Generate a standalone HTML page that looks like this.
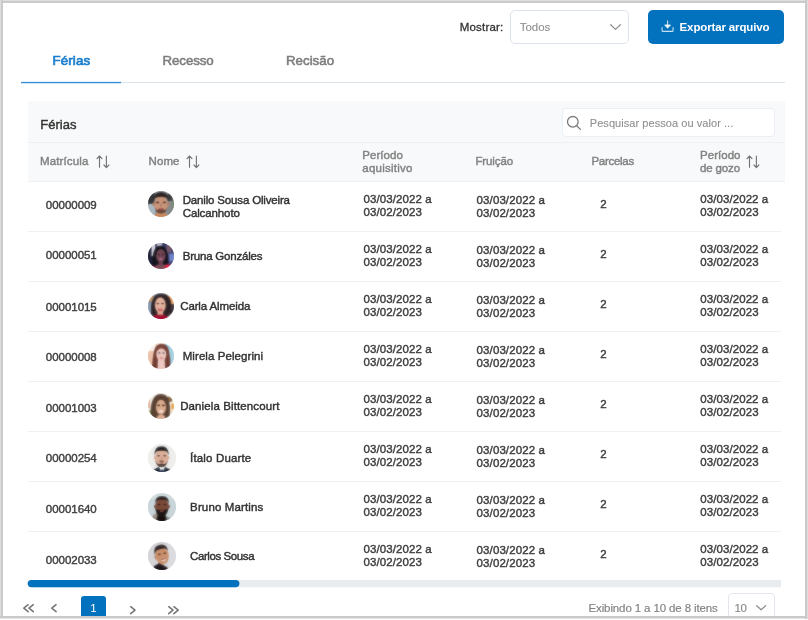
<!DOCTYPE html><html lang="pt-BR"><head><meta charset="utf-8"><title>Férias</title><style>
html,body{margin:0;padding:0}body{width:808px;height:620px;overflow:hidden;background:#fff;position:relative;font-family:"Liberation Sans",sans-serif;-webkit-font-smoothing:antialiased}.t{position:absolute;white-space:pre}.tx{position:absolute;left:0;top:0;width:808px;height:620px}.pg{position:absolute;inset:0;overflow:hidden;will-change:transform}
</style></head><body><div class="pg">
<div style="position:absolute;left:21px;top:82px;width:764px;height:1px;background:#dde3ea"></div>
<div style="position:absolute;left:21px;top:82px;width:100px;height:1px;background:#2f8ad8"></div>
<div style="position:absolute;left:21px;top:83px;width:100px;height:1px;background:rgba(47,138,216,0.22)"></div>
<div style="position:absolute;left:21px;top:81px;width:100px;height:1px;background:rgba(47,138,216,0.10)"></div>
<div style="position:absolute;left:510px;top:10px;width:117px;height:32px;border:1px solid #dde3ec;border-radius:5px;background:#fff"></div>
<svg style="overflow:visible;position:absolute;left:609.7px;top:23.9px" width="11" height="6.2" viewBox="0 0 11 6.2" fill="none" stroke="#8c8c8c" stroke-width="1.2" stroke-linecap="round" stroke-linejoin="round"><path d="M0.7 0.7L5.5 5.4L10.3 0.7"/></svg>
<div style="position:absolute;left:648px;top:9.5px;width:136px;height:34px;background:#0271be;border-radius:5px"></div>
<svg style="overflow:visible;position:absolute;left:661.3px;top:19.8px" width="13" height="12.5" viewBox="0 0 13 12.5" fill="none" stroke="#fff" stroke-opacity="0.78" stroke-width="1.1" stroke-linecap="round" stroke-linejoin="round"><path d="M6.6 0.9V7"/><path d="M3.9 5.1L6.6 8L9.3 5.1Z" fill="#fff" fill-opacity="0.78"/><path d="M1.05 7.5V10.4Q1.05 11.4 2.05 11.4H11.05Q12.05 11.4 12.05 10.4V7.5"/></svg>
<div style="position:absolute;left:27.5px;top:101px;width:757.5px;height:81px;background:#f8f9fa"></div>
<div style="position:absolute;left:27.5px;top:141.5px;width:757.5px;height:1px;background:#eef0f2"></div>
<div style="position:absolute;left:562px;top:108px;width:211px;height:27px;border:1px solid #eceff3;border-radius:4px;background:#fff;box-sizing:content-box"></div>
<svg style="overflow:visible;position:absolute;left:566.5px;top:116px" width="14" height="14" viewBox="0 0 14 14" fill="none" stroke="#7c7c7c" stroke-width="1.3" stroke-linecap="round"><circle cx="5.8" cy="5.8" r="5.3"/><path d="M9.7 9.7L13.4 13.4"/></svg>
<svg style="overflow:visible;position:absolute;left:95.70px;top:154.70px" width="14.2" height="13.4" viewBox="-0.3 -0.3 14.2 13.4" fill="none" stroke="#757575" stroke-width="1.15" stroke-linecap="round" stroke-linejoin="round"><path d="M3.2 12V0.8M0.7 3.3L3.2 0.7L5.7 3.3"/><path d="M10.1 0.8V12.2M7.6 9.7L10.1 12.3L12.6 9.7"/></svg>
<svg style="overflow:visible;position:absolute;left:185.50px;top:154.70px" width="14.2" height="13.4" viewBox="-0.3 -0.3 14.2 13.4" fill="none" stroke="#757575" stroke-width="1.15" stroke-linecap="round" stroke-linejoin="round"><path d="M3.2 12V0.8M0.7 3.3L3.2 0.7L5.7 3.3"/><path d="M10.1 0.8V12.2M7.6 9.7L10.1 12.3L12.6 9.7"/></svg>
<svg style="overflow:visible;position:absolute;left:746.40px;top:154.70px" width="14.2" height="13.4" viewBox="-0.3 -0.3 14.2 13.4" fill="none" stroke="#757575" stroke-width="1.15" stroke-linecap="round" stroke-linejoin="round"><path d="M3.2 12V0.8M0.7 3.3L3.2 0.7L5.7 3.3"/><path d="M10.1 0.8V12.2M7.6 9.7L10.1 12.3L12.6 9.7"/></svg>
<div style="position:absolute;left:27.5px;top:181px;width:757.5px;height:1px;background:#eef0f3"></div>
<div style="position:absolute;left:27.5px;top:231px;width:753px;height:1px;background:#eef0f3"></div>
<div style="position:absolute;left:27.5px;top:281px;width:753px;height:1px;background:#eef0f3"></div>
<div style="position:absolute;left:27.5px;top:331px;width:753px;height:1px;background:#eef0f3"></div>
<div style="position:absolute;left:27.5px;top:381px;width:753px;height:1px;background:#eef0f3"></div>
<div style="position:absolute;left:27.5px;top:431px;width:753px;height:1px;background:#eef0f3"></div>
<div style="position:absolute;left:27.5px;top:481px;width:753px;height:1px;background:#eef0f3"></div>
<div style="position:absolute;left:27.5px;top:531px;width:753px;height:1px;background:#eef0f3"></div>
<svg style="overflow:visible;position:absolute;left:146.70px;top:190.40px" width="28" height="28" viewBox="-1 -1 28 28"><defs><clipPath id="ca160_204"><circle cx="13.0" cy="13.0" r="13.0"/></clipPath><filter id="fa160_204" x="-20%" y="-20%" width="140%" height="140%"><feGaussianBlur stdDeviation="0.85"/></filter></defs><g clip-path="url(#ca160_204)"><g filter="url(#fa160_204)"><rect x="-2" y="-2" width="30" height="30" fill="#8d9499"/>
<rect x="-2" y="-2" width="8.5" height="15" fill="#35383c"/>
<rect x="-2" y="13" width="9" height="15" fill="#aab9c1"/>
<rect x="19.5" y="-2" width="9" height="30" fill="#858a8b"/>
<rect x="19.5" y="3" width="5" height="7" fill="#3f3f40"/>
<rect x="24.800" y="6" width="2.500" height="12" fill="#6f8a62"/>
<ellipse cx="13" cy="25.5" rx="7.2" ry="4" fill="#c98a5e"/>
<ellipse cx="13" cy="13.6" rx="6.800" ry="8.6" fill="#c9967b"/>
<ellipse cx="5.6" cy="13.4" rx="1.2" ry="1.8" fill="#b98263"/>
<ellipse cx="20.4" cy="13.4" rx="1.2" ry="1.8" fill="#b98263"/>
<path d="M6.600 15.5Q7 22.3 13 22.600Q19 22.3 19.400 15.5Q18.600 19 16.200 19.300Q13 16.400 9.800 19.300Q7.400 19 6.600 15.500Z" fill="#5f3f34"/><ellipse cx="13" cy="19.800" rx="3.600" ry="2.400" fill="#6a463a"/>
<ellipse cx="13" cy="18" rx="2.3" ry="1" fill="#a8564f"/>
<path d="M5.4 11Q4.6 1 13 1Q21.4 1 20.6 11Q19.8 7.2 17.5 6.6Q13 5.600 8.500 6.6Q6.2 7.2 5.4 11Z" fill="#2a211f"/>
<ellipse cx="9.6" cy="11.400" rx="1.7" ry="0.9" fill="#4a332b"/>
<ellipse cx="16.4" cy="11.4" rx="1.7" ry="0.9" fill="#4a332b"/>
<ellipse cx="13" cy="14.2" rx="1" ry="1.6" fill="#b07d62"/></g><g opacity="0.45"><rect x="-2" y="-2" width="30" height="30" fill="#8d9499"/>
<rect x="-2" y="-2" width="8.5" height="15" fill="#35383c"/>
<rect x="-2" y="13" width="9" height="15" fill="#aab9c1"/>
<rect x="19.5" y="-2" width="9" height="30" fill="#858a8b"/>
<rect x="19.5" y="3" width="5" height="7" fill="#3f3f40"/>
<rect x="24.800" y="6" width="2.500" height="12" fill="#6f8a62"/>
<ellipse cx="13" cy="25.5" rx="7.2" ry="4" fill="#c98a5e"/>
<ellipse cx="13" cy="13.6" rx="6.800" ry="8.6" fill="#c9967b"/>
<ellipse cx="5.6" cy="13.4" rx="1.2" ry="1.8" fill="#b98263"/>
<ellipse cx="20.4" cy="13.4" rx="1.2" ry="1.8" fill="#b98263"/>
<path d="M6.600 15.5Q7 22.3 13 22.600Q19 22.3 19.400 15.5Q18.600 19 16.200 19.300Q13 16.400 9.800 19.300Q7.400 19 6.600 15.500Z" fill="#5f3f34"/><ellipse cx="13" cy="19.800" rx="3.600" ry="2.400" fill="#6a463a"/>
<ellipse cx="13" cy="18" rx="2.3" ry="1" fill="#a8564f"/>
<path d="M5.4 11Q4.6 1 13 1Q21.4 1 20.6 11Q19.8 7.2 17.5 6.6Q13 5.600 8.500 6.6Q6.2 7.2 5.4 11Z" fill="#2a211f"/>
<ellipse cx="9.6" cy="11.400" rx="1.7" ry="0.9" fill="#4a332b"/>
<ellipse cx="16.4" cy="11.4" rx="1.7" ry="0.9" fill="#4a332b"/>
<ellipse cx="13" cy="14.2" rx="1" ry="1.6" fill="#b07d62"/></g></g></svg>
<svg style="overflow:visible;position:absolute;left:146.70px;top:242.10px" width="28" height="28" viewBox="-1 -1 28 28"><defs><clipPath id="ca160_256"><circle cx="13.0" cy="13.0" r="13.0"/></clipPath><filter id="fa160_256" x="-20%" y="-20%" width="140%" height="140%"><feGaussianBlur stdDeviation="0.85"/></filter></defs><g clip-path="url(#ca160_256)"><g filter="url(#fa160_256)"><rect x="-2" y="-2" width="30" height="30" fill="#3d3c62"/>
<rect x="-2" y="-2" width="7" height="30" fill="#20213a"/>
<rect x="3.6" y="-2" width="3.4" height="15" fill="#d9d9e6"/>
<rect x="9" y="-2" width="5" height="5" fill="#b9b9cf"/>
<rect x="18" y="-2" width="10" height="30" fill="#4e4c7c"/>
<rect x="21.500" y="11" width="6" height="7" fill="#6f88cb"/>
<rect x="19" y="1" width="4" height="8" fill="#7a5a6a"/>
<path d="M4.5 23Q3 3 12.6 2.6Q21.5 3 20.5 23Z" fill="#15121d"/>
<ellipse cx="12.8" cy="25" rx="5.600" ry="4" fill="#7d4c5a"/>
<ellipse cx="12.8" cy="12.8" rx="4.7" ry="6.500" fill="#714654"/>
<ellipse cx="12.8" cy="20.5" rx="2.2" ry="2.5" fill="#6a4050"/>
<ellipse cx="10.8" cy="11.6" rx="1.3" ry="0.8" fill="#3a2430"/>
<ellipse cx="14.9" cy="11.6" rx="1.3" ry="0.8" fill="#3a2430"/>
<ellipse cx="12.8" cy="16" rx="1.7" ry="0.9" fill="#b0708a"/>
<path d="M16.8 28L17.5 21.5L26 22.500L26 28Z" fill="#e32e4b"/>
<path d="M1 28L3 22.5L8 24.500L8 28Z" fill="#d84478"/></g><g opacity="0.45"><rect x="-2" y="-2" width="30" height="30" fill="#3d3c62"/>
<rect x="-2" y="-2" width="7" height="30" fill="#20213a"/>
<rect x="3.6" y="-2" width="3.4" height="15" fill="#d9d9e6"/>
<rect x="9" y="-2" width="5" height="5" fill="#b9b9cf"/>
<rect x="18" y="-2" width="10" height="30" fill="#4e4c7c"/>
<rect x="21.500" y="11" width="6" height="7" fill="#6f88cb"/>
<rect x="19" y="1" width="4" height="8" fill="#7a5a6a"/>
<path d="M4.5 23Q3 3 12.6 2.6Q21.5 3 20.5 23Z" fill="#15121d"/>
<ellipse cx="12.8" cy="25" rx="5.600" ry="4" fill="#7d4c5a"/>
<ellipse cx="12.8" cy="12.8" rx="4.7" ry="6.500" fill="#714654"/>
<ellipse cx="12.8" cy="20.5" rx="2.2" ry="2.5" fill="#6a4050"/>
<ellipse cx="10.8" cy="11.6" rx="1.3" ry="0.8" fill="#3a2430"/>
<ellipse cx="14.9" cy="11.6" rx="1.3" ry="0.8" fill="#3a2430"/>
<ellipse cx="12.8" cy="16" rx="1.7" ry="0.9" fill="#b0708a"/>
<path d="M16.8 28L17.5 21.5L26 22.500L26 28Z" fill="#e32e4b"/>
<path d="M1 28L3 22.5L8 24.500L8 28Z" fill="#d84478"/></g></g></svg>
<svg style="overflow:visible;position:absolute;left:146.70px;top:292.00px" width="28" height="28" viewBox="-1 -1 28 28"><defs><clipPath id="ca160_306"><circle cx="13.0" cy="13.0" r="13.0"/></clipPath><filter id="fa160_306" x="-20%" y="-20%" width="140%" height="140%"><feGaussianBlur stdDeviation="0.85"/></filter></defs><g clip-path="url(#ca160_306)"><g filter="url(#fa160_306)"><rect x="-2" y="-2" width="30" height="30" fill="#8c9099"/>
<rect x="-2" y="10" width="8" height="14" fill="#8fa2b5"/>
<rect x="19" y="2" width="9" height="9" fill="#e8a877"/>
<rect x="21" y="11" width="7" height="10" fill="#4a4448"/>
<rect x="-1" y="3" width="6" height="5" fill="#c89a70"/>
<path d="M3 21Q1.500 1 13 1Q24 1 23.500 14Q24 22 19 23.500L5 23Z" fill="#2e2326"/>
<ellipse cx="12.300" cy="12.200" rx="5.300" ry="7.600" fill="#e3b39d"/>
<rect x="9.500" y="18" width="5.500" height="6" fill="#dca78f"/>
<ellipse cx="12.3" cy="16.4" rx="2.4" ry="1.5" fill="#c12f3e"/>
<ellipse cx="12.3" cy="16" rx="1.7" ry="0.6" fill="#f6ecea"/>
<ellipse cx="9.900" cy="10.6" rx="1.4" ry="0.8" fill="#5a3c38"/>
<ellipse cx="14.6" cy="10.6" rx="1.4" ry="0.8" fill="#5a3c38"/>
<ellipse cx="12" cy="26.200" rx="9.200" ry="4.600" fill="#a40f31"/></g><g opacity="0.45"><rect x="-2" y="-2" width="30" height="30" fill="#8c9099"/>
<rect x="-2" y="10" width="8" height="14" fill="#8fa2b5"/>
<rect x="19" y="2" width="9" height="9" fill="#e8a877"/>
<rect x="21" y="11" width="7" height="10" fill="#4a4448"/>
<rect x="-1" y="3" width="6" height="5" fill="#c89a70"/>
<path d="M3 21Q1.500 1 13 1Q24 1 23.500 14Q24 22 19 23.500L5 23Z" fill="#2e2326"/>
<ellipse cx="12.300" cy="12.200" rx="5.300" ry="7.600" fill="#e3b39d"/>
<rect x="9.500" y="18" width="5.500" height="6" fill="#dca78f"/>
<ellipse cx="12.3" cy="16.4" rx="2.4" ry="1.5" fill="#c12f3e"/>
<ellipse cx="12.3" cy="16" rx="1.7" ry="0.6" fill="#f6ecea"/>
<ellipse cx="9.900" cy="10.6" rx="1.4" ry="0.8" fill="#5a3c38"/>
<ellipse cx="14.6" cy="10.6" rx="1.4" ry="0.8" fill="#5a3c38"/>
<ellipse cx="12" cy="26.200" rx="9.200" ry="4.600" fill="#a40f31"/></g></g></svg>
<svg style="overflow:visible;position:absolute;left:146.70px;top:342.10px" width="28" height="28" viewBox="-1 -1 28 28"><defs><clipPath id="ca160_356"><circle cx="13.0" cy="13.0" r="13.0"/></clipPath><filter id="fa160_356" x="-20%" y="-20%" width="140%" height="140%"><feGaussianBlur stdDeviation="0.85"/></filter></defs><g clip-path="url(#ca160_356)"><g filter="url(#fa160_356)"><rect x="-2" y="-2" width="30" height="30" fill="#f3dfd1"/>
<rect x="-2" y="8" width="8" height="20" fill="#ecc3ab"/>
<rect x="1" y="0" width="6" height="8" fill="#faf1ea"/>
<rect x="17" y="-2" width="11" height="30" fill="#a8d2e3"/>
<path d="M3.800 26Q4.500 14 6 8Q7.500 0.800 13.600 0.800Q20 0.800 21 8Q23 16 22.500 24L17 26Z" fill="#743c31"/>
<path d="M10 16L16.600 16L17.200 28L9.500 28Z" fill="#edc9c2"/>
<ellipse cx="13.3" cy="11.3" rx="4.9" ry="6.700" fill="#ecc6bc"/>
<ellipse cx="13.3" cy="15.2" rx="1.800" ry="0.9" fill="#d9808c"/>
<ellipse cx="11.3" cy="10" rx="1.3" ry="0.8" fill="#5e5a78"/>
<ellipse cx="15.4" cy="10" rx="1.3" ry="0.8" fill="#5e5a78"/>
<path d="M8.300 9Q8.800 3.300 13.500 3.300Q18.200 3.300 18.500 9Q16 5.300 13.400 5.400Q10.500 5.300 8.300 9Z" fill="#80453a"/></g><g opacity="0.45"><rect x="-2" y="-2" width="30" height="30" fill="#f3dfd1"/>
<rect x="-2" y="8" width="8" height="20" fill="#ecc3ab"/>
<rect x="1" y="0" width="6" height="8" fill="#faf1ea"/>
<rect x="17" y="-2" width="11" height="30" fill="#a8d2e3"/>
<path d="M3.800 26Q4.500 14 6 8Q7.500 0.800 13.600 0.800Q20 0.800 21 8Q23 16 22.500 24L17 26Z" fill="#743c31"/>
<path d="M10 16L16.600 16L17.200 28L9.500 28Z" fill="#edc9c2"/>
<ellipse cx="13.3" cy="11.3" rx="4.9" ry="6.700" fill="#ecc6bc"/>
<ellipse cx="13.3" cy="15.2" rx="1.800" ry="0.9" fill="#d9808c"/>
<ellipse cx="11.3" cy="10" rx="1.3" ry="0.8" fill="#5e5a78"/>
<ellipse cx="15.4" cy="10" rx="1.3" ry="0.8" fill="#5e5a78"/>
<path d="M8.300 9Q8.800 3.300 13.500 3.300Q18.200 3.300 18.500 9Q16 5.300 13.400 5.400Q10.500 5.300 8.300 9Z" fill="#80453a"/></g></g></svg>
<svg style="overflow:visible;position:absolute;left:146.70px;top:392.00px" width="28" height="28" viewBox="-1 -1 28 28"><defs><clipPath id="ca160_406"><circle cx="13.0" cy="13.0" r="13.0"/></clipPath><filter id="fa160_406" x="-20%" y="-20%" width="140%" height="140%"><feGaussianBlur stdDeviation="0.85"/></filter></defs><g clip-path="url(#ca160_406)"><g filter="url(#fa160_406)"><rect x="-2" y="-2" width="30" height="30" fill="#f5f2eb"/>
<rect x="23.3" y="10.5" width="3.500" height="5.500" fill="#eaa040"/>
<rect x="22" y="16" width="4" height="4" fill="#f0e0c0"/>
<rect x="-1" y="6" width="3.200" height="9" fill="#e9b9a0"/>
<rect x="-1" y="17.500" width="4.500" height="5.500" fill="#9bb060"/>
<ellipse cx="21.3" cy="6.2" rx="3.4" ry="2.500" fill="#8d6b3f" transform="rotate(25 21.3 6.2)"/>
<path d="M2.500 22Q2 12 5 6Q8 0.500 13 1Q18.500 0.500 21 7Q23 14 22 22Q20 25.500 17 25.500L7 25.500Q4 25 2.500 22Z" fill="#5a4031"/>
<ellipse cx="13" cy="14.3" rx="5" ry="7.500" fill="#d9aa8b"/>
<ellipse cx="13" cy="24.800" rx="4" ry="3" fill="#ddb094"/>
<ellipse cx="13" cy="18.300" rx="2.3" ry="1.400" fill="#f3dcd6"/>
<ellipse cx="10.700" cy="12.300" rx="1.500" ry="0.900" fill="#3e2a24"/>
<ellipse cx="15.300" cy="12.300" rx="1.500" ry="0.900" fill="#3e2a24"/>
<path d="M7.800 11Q8.500 4 13 4.500Q17.500 4 18.300 11Q16 6.500 13 6.800Q10 6.500 7.800 11Z" fill="#5a4031"/></g><g opacity="0.45"><rect x="-2" y="-2" width="30" height="30" fill="#f5f2eb"/>
<rect x="23.3" y="10.5" width="3.500" height="5.500" fill="#eaa040"/>
<rect x="22" y="16" width="4" height="4" fill="#f0e0c0"/>
<rect x="-1" y="6" width="3.200" height="9" fill="#e9b9a0"/>
<rect x="-1" y="17.500" width="4.500" height="5.500" fill="#9bb060"/>
<ellipse cx="21.3" cy="6.2" rx="3.4" ry="2.500" fill="#8d6b3f" transform="rotate(25 21.3 6.2)"/>
<path d="M2.500 22Q2 12 5 6Q8 0.500 13 1Q18.500 0.500 21 7Q23 14 22 22Q20 25.500 17 25.500L7 25.500Q4 25 2.500 22Z" fill="#5a4031"/>
<ellipse cx="13" cy="14.3" rx="5" ry="7.500" fill="#d9aa8b"/>
<ellipse cx="13" cy="24.800" rx="4" ry="3" fill="#ddb094"/>
<ellipse cx="13" cy="18.300" rx="2.3" ry="1.400" fill="#f3dcd6"/>
<ellipse cx="10.700" cy="12.300" rx="1.500" ry="0.900" fill="#3e2a24"/>
<ellipse cx="15.300" cy="12.300" rx="1.500" ry="0.900" fill="#3e2a24"/>
<path d="M7.800 11Q8.500 4 13 4.500Q17.500 4 18.300 11Q16 6.500 13 6.800Q10 6.500 7.800 11Z" fill="#5a4031"/></g></g></svg>
<svg style="overflow:visible;position:absolute;left:147.10px;top:442.50px" width="30" height="30" viewBox="-1 -1 30 30"><defs><clipPath id="ca162_457"><circle cx="14.0" cy="14.0" r="14.0"/></clipPath><filter id="fa162_457" x="-20%" y="-20%" width="140%" height="140%"><feGaussianBlur stdDeviation="0.85"/></filter></defs><g clip-path="url(#ca162_457)"><g filter="url(#fa162_457)"><rect x="-2" y="-2" width="32" height="32" fill="#eeeeec"/>
<path d="M3 30L5.500 25.500L11.200 22.800L14 28.500L16.800 22.800L22.500 25.500L25 30Z" fill="#1f2b3b"/>
<path d="M11 22.500L14 29.500L17 22.500Z" fill="#f4f4f6"/>
<path d="M12.800 25.500L15.200 25.500L15.600 30L12.400 30Z" fill="#2c3c5e"/>
<ellipse cx="13.6" cy="13.8" rx="6.600" ry="8.9" fill="#dcb09a"/>
<ellipse cx="6.900" cy="13.800" rx="1" ry="1.800" fill="#d2a28a"/>
<ellipse cx="20.300" cy="13.800" rx="1" ry="1.800" fill="#d2a28a"/>
<path d="M7.200 15Q7.500 22.900 13.600 23.300Q19.700 22.900 20 15Q19.200 19.600 16.600 20.100Q13.600 18.700 10.600 20.100Q8 19.600 7.200 15Z" fill="#4a3530"/>
<ellipse cx="13.6" cy="17.300" rx="2.700" ry="0.800" fill="#6a4a40"/>
<ellipse cx="13.6" cy="18.600" rx="1.600" ry="0.700" fill="#b97468"/>
<path d="M6.700 12Q5.600 2.200 13.500 2.200Q21.400 2.200 20.500 12Q19.900 8 18 7.300Q13.500 6.300 9.200 7.300Q7.300 8 6.700 12Z" fill="#1f1b1d"/>
<ellipse cx="10.600" cy="11.700" rx="1.600" ry="0.800" fill="#5a3a30"/>
<ellipse cx="16.700" cy="11.700" rx="1.600" ry="0.800" fill="#5a3a30"/>
<ellipse cx="13.6" cy="14.500" rx="0.900" ry="1.600" fill="#c99a84"/></g><g opacity="0.45"><rect x="-2" y="-2" width="32" height="32" fill="#eeeeec"/>
<path d="M3 30L5.500 25.500L11.200 22.800L14 28.500L16.800 22.800L22.500 25.500L25 30Z" fill="#1f2b3b"/>
<path d="M11 22.500L14 29.500L17 22.500Z" fill="#f4f4f6"/>
<path d="M12.800 25.500L15.200 25.500L15.600 30L12.400 30Z" fill="#2c3c5e"/>
<ellipse cx="13.6" cy="13.8" rx="6.600" ry="8.9" fill="#dcb09a"/>
<ellipse cx="6.900" cy="13.800" rx="1" ry="1.800" fill="#d2a28a"/>
<ellipse cx="20.300" cy="13.800" rx="1" ry="1.800" fill="#d2a28a"/>
<path d="M7.200 15Q7.500 22.900 13.600 23.300Q19.700 22.900 20 15Q19.200 19.600 16.600 20.100Q13.600 18.700 10.600 20.100Q8 19.600 7.200 15Z" fill="#4a3530"/>
<ellipse cx="13.6" cy="17.300" rx="2.700" ry="0.800" fill="#6a4a40"/>
<ellipse cx="13.6" cy="18.600" rx="1.600" ry="0.700" fill="#b97468"/>
<path d="M6.700 12Q5.600 2.200 13.500 2.200Q21.400 2.200 20.500 12Q19.900 8 18 7.300Q13.500 6.300 9.200 7.300Q7.300 8 6.700 12Z" fill="#1f1b1d"/>
<ellipse cx="10.600" cy="11.700" rx="1.600" ry="0.800" fill="#5a3a30"/>
<ellipse cx="16.700" cy="11.700" rx="1.600" ry="0.800" fill="#5a3a30"/>
<ellipse cx="13.6" cy="14.500" rx="0.900" ry="1.600" fill="#c99a84"/></g></g></svg>
<svg style="overflow:visible;position:absolute;left:147.10px;top:491.90px" width="30" height="30" viewBox="-1 -1 30 30"><defs><clipPath id="ca162_506"><circle cx="14.0" cy="14.0" r="14.0"/></clipPath><filter id="fa162_506" x="-20%" y="-20%" width="140%" height="140%"><feGaussianBlur stdDeviation="0.85"/></filter></defs><g clip-path="url(#ca162_506)"><g filter="url(#fa162_506)"><rect x="-2" y="-2" width="32" height="32" fill="#c9d5d9"/>
<rect x="-2" y="-2" width="32" height="8" fill="#d3dde0"/>
<path d="M2.500 28L5.500 21.500L10 19.500L11.500 30Z" fill="#9a9188"/>
<path d="M16.500 22L22 25L23 30L16 30Z" fill="#8a9092"/>
<ellipse cx="13.5" cy="26" rx="5" ry="5.800" fill="#15100f"/>
<ellipse cx="14" cy="13.5" rx="7" ry="8.400" fill="#7b4b39"/>
<ellipse cx="7" cy="13.500" rx="1" ry="1.800" fill="#6f4232"/>
<ellipse cx="21" cy="13.500" rx="1" ry="1.800" fill="#6f4232"/>
<path d="M7.500 15.500Q7.500 23 13.600 24.500Q19.800 23 20.200 15.500Q17 17.600 13.800 16.600Q10.500 17.600 7.500 15.500Z" fill="#1b1514"/>
<ellipse cx="13.8" cy="18" rx="2.200" ry="1.100" fill="#7a3f3c"/>
<path d="M7.200 10.500Q6.500 3 14 3Q21.500 3 20.800 10.500Q20 7.500 18 7Q14 6.300 10 7Q8 7.500 7.200 10.500Z" fill="#2a2020"/>
<ellipse cx="11" cy="11.600" rx="1.700" ry="0.800" fill="#3a2520"/>
<ellipse cx="17" cy="11.600" rx="1.700" ry="0.800" fill="#3a2520"/></g><g opacity="0.45"><rect x="-2" y="-2" width="32" height="32" fill="#c9d5d9"/>
<rect x="-2" y="-2" width="32" height="8" fill="#d3dde0"/>
<path d="M2.500 28L5.500 21.500L10 19.500L11.500 30Z" fill="#9a9188"/>
<path d="M16.500 22L22 25L23 30L16 30Z" fill="#8a9092"/>
<ellipse cx="13.5" cy="26" rx="5" ry="5.800" fill="#15100f"/>
<ellipse cx="14" cy="13.5" rx="7" ry="8.400" fill="#7b4b39"/>
<ellipse cx="7" cy="13.500" rx="1" ry="1.800" fill="#6f4232"/>
<ellipse cx="21" cy="13.500" rx="1" ry="1.800" fill="#6f4232"/>
<path d="M7.500 15.500Q7.500 23 13.600 24.500Q19.800 23 20.200 15.500Q17 17.600 13.800 16.600Q10.500 17.600 7.500 15.500Z" fill="#1b1514"/>
<ellipse cx="13.8" cy="18" rx="2.200" ry="1.100" fill="#7a3f3c"/>
<path d="M7.200 10.500Q6.500 3 14 3Q21.500 3 20.800 10.500Q20 7.500 18 7Q14 6.300 10 7Q8 7.500 7.200 10.500Z" fill="#2a2020"/>
<ellipse cx="11" cy="11.600" rx="1.700" ry="0.800" fill="#3a2520"/>
<ellipse cx="17" cy="11.600" rx="1.700" ry="0.800" fill="#3a2520"/></g></g></svg>
<svg style="overflow:visible;position:absolute;left:147.10px;top:540.90px" width="30" height="30" viewBox="-1 -1 30 30"><defs><clipPath id="ca162_555"><circle cx="14.0" cy="14.0" r="14.0"/></clipPath><filter id="fa162_555" x="-20%" y="-20%" width="140%" height="140%"><feGaussianBlur stdDeviation="0.85"/></filter></defs><g clip-path="url(#ca162_555)"><g filter="url(#fa162_555)"><rect x="-2" y="-2" width="32" height="32" fill="#d5d5d9"/>
<rect x="20" y="-2" width="10" height="32" fill="#dcdce0"/>
<path d="M3.500 30L6 24L11.500 20.800L19.500 25.500L20 30Z" fill="#1f171f"/>
<g transform="rotate(-12 14 13.5)">
<ellipse cx="14" cy="13.5" rx="6.800" ry="9" fill="#c9916d"/>
<ellipse cx="7.200" cy="14" rx="1" ry="1.900" fill="#b98263"/>
<path d="M7 12Q6 2.500 14 2.500Q21 2.500 21 10Q19.500 7.500 17.500 7.200Q13 6.500 9.500 7.800Q7.800 8.500 7 12Z" fill="#2a2224"/>
<ellipse cx="11.800" cy="11.800" rx="1.600" ry="0.800" fill="#5a382c"/>
<ellipse cx="17.200" cy="11.800" rx="1.600" ry="0.800" fill="#5a382c"/>
<ellipse cx="14.800" cy="18.200" rx="2.300" ry="1.100" fill="#ecd9d2"/>
<ellipse cx="14.800" cy="17.300" rx="3" ry="0.600" fill="#a86a58"/>
</g></g><g opacity="0.45"><rect x="-2" y="-2" width="32" height="32" fill="#d5d5d9"/>
<rect x="20" y="-2" width="10" height="32" fill="#dcdce0"/>
<path d="M3.500 30L6 24L11.500 20.800L19.500 25.500L20 30Z" fill="#1f171f"/>
<g transform="rotate(-12 14 13.5)">
<ellipse cx="14" cy="13.5" rx="6.800" ry="9" fill="#c9916d"/>
<ellipse cx="7.200" cy="14" rx="1" ry="1.900" fill="#b98263"/>
<path d="M7 12Q6 2.500 14 2.500Q21 2.500 21 10Q19.500 7.500 17.500 7.200Q13 6.500 9.500 7.800Q7.800 8.500 7 12Z" fill="#2a2224"/>
<ellipse cx="11.800" cy="11.800" rx="1.600" ry="0.800" fill="#5a382c"/>
<ellipse cx="17.200" cy="11.800" rx="1.600" ry="0.800" fill="#5a382c"/>
<ellipse cx="14.800" cy="18.200" rx="2.300" ry="1.100" fill="#ecd9d2"/>
<ellipse cx="14.800" cy="17.300" rx="3" ry="0.600" fill="#a86a58"/>
</g></g></g></svg>
<svg style="position:absolute;left:0;top:575px" width="808" height="16" viewBox="0 575 808 16"><path d="M31.4 579.9H781V587.3H31.4A3.7 3.7 0 0 1 31.4 579.9Z" fill="#e9ecef"/><rect x="27.7" y="579.9" width="211.7" height="7.4" rx="3.7" fill="#0271be"/></svg>
<div style="position:absolute;left:81.2px;top:595.5px;width:24.5px;height:26px;background:#0271be;border-radius:3px"></div>
<svg style="overflow:visible;position:absolute;left:23px;top:603.9px" width="11.0" height="8.4" viewBox="0 0 11.0 8.4" fill="none" stroke="#747474" stroke-width="1.5" stroke-linecap="round" stroke-linejoin="round"><path d="M5.1 0.7L0.8 4.2L5.1 7.7"/><path d="M10.3 0.7L6.0 4.2L10.3 7.7"/></svg>
<svg style="overflow:visible;position:absolute;left:50.8px;top:603.9px" width="5.8" height="8.4" viewBox="0 0 5.8 8.4" fill="none" stroke="#747474" stroke-width="1.5" stroke-linecap="round" stroke-linejoin="round"><path d="M5.1 0.7L0.8 4.2L5.1 7.7"/></svg>
<svg style="overflow:visible;position:absolute;left:130.3px;top:605.6px" width="5.8" height="8.4" viewBox="0 0 5.8 8.4" fill="none" stroke="#747474" stroke-width="1.5" stroke-linecap="round" stroke-linejoin="round"><path d="M0.7 0.7L5.0 4.2L0.7 7.7"/></svg>
<svg style="overflow:visible;position:absolute;left:168.2px;top:605.6px" width="11.0" height="8.4" viewBox="0 0 11.0 8.4" fill="none" stroke="#747474" stroke-width="1.5" stroke-linecap="round" stroke-linejoin="round"><path d="M0.7 0.7L5.0 4.2L0.7 7.7"/><path d="M5.9 0.7L10.2 4.2L5.9 7.7"/></svg>
<div style="position:absolute;left:728px;top:593px;width:45px;height:30px;border:1px solid #e3e7ed;border-radius:4px;background:#fff"></div>
<svg style="overflow:visible;position:absolute;left:755.5px;top:605.2px" width="10.3" height="5.6" viewBox="0 0 10.3 5.6" fill="none" stroke="#8c8c8c" stroke-width="1.2" stroke-linecap="round" stroke-linejoin="round"><path d="M0.7 0.7L5.15 4.8L9.600000000000001 0.7"/></svg>
<div class="tx">
<span class="t" style="left:52.40px;top:54.30px;font-size:13.3px;line-height:13.3px;color:#1c7fce;font-weight:400;letter-spacing:0.160px;-webkit-text-stroke:0.7px #1c7fce;">Férias</span>
<span class="t" style="left:162.50px;top:54.30px;font-size:13.3px;line-height:13.3px;color:#7d7d7d;font-weight:400;letter-spacing:-0.083px;-webkit-text-stroke:0.55px #7d7d7d;">Recesso</span>
<span class="t" style="left:286.00px;top:54.30px;font-size:13.3px;line-height:13.3px;color:#7d7d7d;font-weight:400;letter-spacing:0.000px;-webkit-text-stroke:0.55px #7d7d7d;">Recisão</span>
<span class="t" style="left:459.80px;top:22.00px;font-size:11.5px;line-height:11.5px;color:#333;font-weight:400;letter-spacing:0.171px;-webkit-text-stroke:0.3px #333;">Mostrar:</span>
<span class="t" style="left:519.70px;top:22.00px;font-size:11.5px;line-height:11.5px;color:#8f8f8f;font-weight:400;letter-spacing:-0.025px;-webkit-text-stroke:0.1px #8f8f8f;">Todos</span>
<span class="t" style="left:679.60px;top:21.80px;font-size:11.5px;line-height:11.5px;color:#fff;font-weight:700;letter-spacing:-0.140px;-webkit-text-stroke:0px #fff;">Exportar arquivo</span>
<span class="t" style="left:40.20px;top:117.90px;font-size:13px;line-height:13px;color:#333;font-weight:400;letter-spacing:0.020px;-webkit-text-stroke:0.42px #333;">Férias</span>
<span class="t" style="left:589.80px;top:117.50px;font-size:11px;line-height:11px;color:#8f8f8f;font-weight:400;letter-spacing:0.057px;-webkit-text-stroke:0.1px #8f8f8f;">Pesquisar pessoa ou valor ...</span>
<span class="t" style="left:40.00px;top:156.30px;font-size:11.5px;line-height:11.5px;color:#828282;font-weight:400;letter-spacing:0.125px;-webkit-text-stroke:0.42px #828282;">Matrícula</span>
<span class="t" style="left:148.60px;top:156.00px;font-size:11.5px;line-height:11.5px;color:#828282;font-weight:400;letter-spacing:0.067px;-webkit-text-stroke:0.42px #828282;">Nome</span>
<span class="t" style="left:362.30px;top:150.30px;font-size:11.5px;line-height:11.5px;color:#828282;font-weight:400;letter-spacing:0.050px;-webkit-text-stroke:0.42px #828282;">Período</span>
<span class="t" style="left:362.30px;top:163.20px;font-size:11.5px;line-height:11.5px;color:#828282;font-weight:400;letter-spacing:0.244px;-webkit-text-stroke:0.42px #828282;">aquisitivo</span>
<span class="t" style="left:475.40px;top:156.00px;font-size:11.5px;line-height:11.5px;color:#828282;font-weight:400;letter-spacing:-0.100px;-webkit-text-stroke:0.42px #828282;">Fruição</span>
<span class="t" style="left:591.40px;top:156.00px;font-size:11.5px;line-height:11.5px;color:#828282;font-weight:400;letter-spacing:-0.271px;-webkit-text-stroke:0.42px #828282;">Parcelas</span>
<span class="t" style="left:700.00px;top:150.00px;font-size:11.5px;line-height:11.5px;color:#828282;font-weight:400;letter-spacing:0.033px;-webkit-text-stroke:0.42px #828282;">Período</span>
<span class="t" style="left:700.00px;top:162.80px;font-size:11.5px;line-height:11.5px;color:#828282;font-weight:400;letter-spacing:-0.150px;-webkit-text-stroke:0.42px #828282;">de gozo</span>
<span class="t" style="left:45.80px;top:199.60px;font-size:11.5px;line-height:11.5px;color:#404040;font-weight:400;letter-spacing:-0.029px;-webkit-text-stroke:0.42px #404040;">00000009</span>
<span class="t" style="left:182.70px;top:195.30px;font-size:11.5px;line-height:11.5px;color:#333;font-weight:400;letter-spacing:-0.165px;-webkit-text-stroke:0.42px #333;">Danilo Sousa Oliveira</span>
<span class="t" style="left:182.70px;top:208.10px;font-size:11.5px;line-height:11.5px;color:#333;font-weight:400;letter-spacing:-0.111px;-webkit-text-stroke:0.42px #333;">Calcanhoto</span>
<span class="t" style="left:363.50px;top:194.00px;font-size:11.5px;line-height:11.5px;color:#404040;font-weight:400;letter-spacing:0.100px;-webkit-text-stroke:0.42px #404040;">03/03/2022 a</span>
<span class="t" style="left:363.50px;top:207.00px;font-size:11.5px;line-height:11.5px;color:#404040;font-weight:400;letter-spacing:0.100px;-webkit-text-stroke:0.42px #404040;">03/02/2023</span>
<span class="t" style="left:476.60px;top:195.30px;font-size:11.5px;line-height:11.5px;color:#404040;font-weight:400;letter-spacing:0.100px;-webkit-text-stroke:0.42px #404040;">03/03/2022 a</span>
<span class="t" style="left:476.60px;top:208.20px;font-size:11.5px;line-height:11.5px;color:#404040;font-weight:400;letter-spacing:0.100px;-webkit-text-stroke:0.42px #404040;">03/02/2023</span>
<span class="t" style="left:600.30px;top:199.40px;font-size:11.5px;line-height:11.5px;color:#404040;font-weight:400;letter-spacing:0.000px;-webkit-text-stroke:0.42px #404040;">2</span>
<span class="t" style="left:700.30px;top:194.00px;font-size:11.5px;line-height:11.5px;color:#404040;font-weight:400;letter-spacing:0.073px;-webkit-text-stroke:0.42px #404040;">03/03/2022 a</span>
<span class="t" style="left:700.30px;top:207.00px;font-size:11.5px;line-height:11.5px;color:#404040;font-weight:400;letter-spacing:0.078px;-webkit-text-stroke:0.42px #404040;">03/02/2023</span>
<span class="t" style="left:45.80px;top:250.10px;font-size:11.5px;line-height:11.5px;color:#404040;font-weight:400;letter-spacing:-0.029px;-webkit-text-stroke:0.42px #404040;">00000051</span>
<span class="t" style="left:182.70px;top:251.40px;font-size:11.5px;line-height:11.5px;color:#333;font-weight:400;letter-spacing:-0.208px;-webkit-text-stroke:0.42px #333;">Bruna Gonzáles</span>
<span class="t" style="left:363.50px;top:243.93px;font-size:11.5px;line-height:11.5px;color:#404040;font-weight:400;letter-spacing:0.100px;-webkit-text-stroke:0.42px #404040;">03/03/2022 a</span>
<span class="t" style="left:363.50px;top:256.93px;font-size:11.5px;line-height:11.5px;color:#404040;font-weight:400;letter-spacing:0.100px;-webkit-text-stroke:0.42px #404040;">03/02/2023</span>
<span class="t" style="left:476.60px;top:245.23px;font-size:11.5px;line-height:11.5px;color:#404040;font-weight:400;letter-spacing:0.100px;-webkit-text-stroke:0.42px #404040;">03/03/2022 a</span>
<span class="t" style="left:476.60px;top:258.13px;font-size:11.5px;line-height:11.5px;color:#404040;font-weight:400;letter-spacing:0.100px;-webkit-text-stroke:0.42px #404040;">03/02/2023</span>
<span class="t" style="left:600.30px;top:249.33px;font-size:11.5px;line-height:11.5px;color:#404040;font-weight:400;letter-spacing:0.000px;-webkit-text-stroke:0.42px #404040;">2</span>
<span class="t" style="left:700.30px;top:243.93px;font-size:11.5px;line-height:11.5px;color:#404040;font-weight:400;letter-spacing:0.073px;-webkit-text-stroke:0.42px #404040;">03/03/2022 a</span>
<span class="t" style="left:700.30px;top:256.93px;font-size:11.5px;line-height:11.5px;color:#404040;font-weight:400;letter-spacing:0.078px;-webkit-text-stroke:0.42px #404040;">03/02/2023</span>
<span class="t" style="left:45.80px;top:301.50px;font-size:11.5px;line-height:11.5px;color:#404040;font-weight:400;letter-spacing:-0.029px;-webkit-text-stroke:0.42px #404040;">00001015</span>
<span class="t" style="left:180.20px;top:301.20px;font-size:11.5px;line-height:11.5px;color:#333;font-weight:400;letter-spacing:-0.117px;-webkit-text-stroke:0.42px #333;">Carla Almeida</span>
<span class="t" style="left:363.50px;top:293.86px;font-size:11.5px;line-height:11.5px;color:#404040;font-weight:400;letter-spacing:0.100px;-webkit-text-stroke:0.42px #404040;">03/03/2022 a</span>
<span class="t" style="left:363.50px;top:306.86px;font-size:11.5px;line-height:11.5px;color:#404040;font-weight:400;letter-spacing:0.100px;-webkit-text-stroke:0.42px #404040;">03/02/2023</span>
<span class="t" style="left:476.60px;top:295.16px;font-size:11.5px;line-height:11.5px;color:#404040;font-weight:400;letter-spacing:0.100px;-webkit-text-stroke:0.42px #404040;">03/03/2022 a</span>
<span class="t" style="left:476.60px;top:308.06px;font-size:11.5px;line-height:11.5px;color:#404040;font-weight:400;letter-spacing:0.100px;-webkit-text-stroke:0.42px #404040;">03/02/2023</span>
<span class="t" style="left:600.30px;top:299.26px;font-size:11.5px;line-height:11.5px;color:#404040;font-weight:400;letter-spacing:0.000px;-webkit-text-stroke:0.42px #404040;">2</span>
<span class="t" style="left:700.30px;top:293.86px;font-size:11.5px;line-height:11.5px;color:#404040;font-weight:400;letter-spacing:0.073px;-webkit-text-stroke:0.42px #404040;">03/03/2022 a</span>
<span class="t" style="left:700.30px;top:306.86px;font-size:11.5px;line-height:11.5px;color:#404040;font-weight:400;letter-spacing:0.078px;-webkit-text-stroke:0.42px #404040;">03/02/2023</span>
<span class="t" style="left:45.80px;top:352.00px;font-size:11.5px;line-height:11.5px;color:#404040;font-weight:400;letter-spacing:-0.029px;-webkit-text-stroke:0.42px #404040;">00000008</span>
<span class="t" style="left:182.70px;top:351.40px;font-size:11.5px;line-height:11.5px;color:#333;font-weight:400;letter-spacing:0.080px;-webkit-text-stroke:0.42px #333;">Mirela Pelegrini</span>
<span class="t" style="left:363.50px;top:343.79px;font-size:11.5px;line-height:11.5px;color:#404040;font-weight:400;letter-spacing:0.100px;-webkit-text-stroke:0.42px #404040;">03/03/2022 a</span>
<span class="t" style="left:363.50px;top:356.79px;font-size:11.5px;line-height:11.5px;color:#404040;font-weight:400;letter-spacing:0.100px;-webkit-text-stroke:0.42px #404040;">03/02/2023</span>
<span class="t" style="left:476.60px;top:345.09px;font-size:11.5px;line-height:11.5px;color:#404040;font-weight:400;letter-spacing:0.100px;-webkit-text-stroke:0.42px #404040;">03/03/2022 a</span>
<span class="t" style="left:476.60px;top:357.99px;font-size:11.5px;line-height:11.5px;color:#404040;font-weight:400;letter-spacing:0.100px;-webkit-text-stroke:0.42px #404040;">03/02/2023</span>
<span class="t" style="left:600.30px;top:349.19px;font-size:11.5px;line-height:11.5px;color:#404040;font-weight:400;letter-spacing:0.000px;-webkit-text-stroke:0.42px #404040;">2</span>
<span class="t" style="left:700.30px;top:343.79px;font-size:11.5px;line-height:11.5px;color:#404040;font-weight:400;letter-spacing:0.073px;-webkit-text-stroke:0.42px #404040;">03/03/2022 a</span>
<span class="t" style="left:700.30px;top:356.79px;font-size:11.5px;line-height:11.5px;color:#404040;font-weight:400;letter-spacing:0.078px;-webkit-text-stroke:0.42px #404040;">03/02/2023</span>
<span class="t" style="left:45.80px;top:402.80px;font-size:11.5px;line-height:11.5px;color:#404040;font-weight:400;letter-spacing:-0.029px;-webkit-text-stroke:0.42px #404040;">00001003</span>
<span class="t" style="left:180.20px;top:401.20px;font-size:11.5px;line-height:11.5px;color:#333;font-weight:400;letter-spacing:0.111px;-webkit-text-stroke:0.42px #333;">Daniela Bittencourt</span>
<span class="t" style="left:363.50px;top:393.72px;font-size:11.5px;line-height:11.5px;color:#404040;font-weight:400;letter-spacing:0.100px;-webkit-text-stroke:0.42px #404040;">03/03/2022 a</span>
<span class="t" style="left:363.50px;top:406.72px;font-size:11.5px;line-height:11.5px;color:#404040;font-weight:400;letter-spacing:0.100px;-webkit-text-stroke:0.42px #404040;">03/02/2023</span>
<span class="t" style="left:476.60px;top:395.02px;font-size:11.5px;line-height:11.5px;color:#404040;font-weight:400;letter-spacing:0.100px;-webkit-text-stroke:0.42px #404040;">03/03/2022 a</span>
<span class="t" style="left:476.60px;top:407.92px;font-size:11.5px;line-height:11.5px;color:#404040;font-weight:400;letter-spacing:0.100px;-webkit-text-stroke:0.42px #404040;">03/02/2023</span>
<span class="t" style="left:600.30px;top:399.12px;font-size:11.5px;line-height:11.5px;color:#404040;font-weight:400;letter-spacing:0.000px;-webkit-text-stroke:0.42px #404040;">2</span>
<span class="t" style="left:700.30px;top:393.72px;font-size:11.5px;line-height:11.5px;color:#404040;font-weight:400;letter-spacing:0.073px;-webkit-text-stroke:0.42px #404040;">03/03/2022 a</span>
<span class="t" style="left:700.30px;top:406.72px;font-size:11.5px;line-height:11.5px;color:#404040;font-weight:400;letter-spacing:0.078px;-webkit-text-stroke:0.42px #404040;">03/02/2023</span>
<span class="t" style="left:45.80px;top:453.20px;font-size:11.5px;line-height:11.5px;color:#404040;font-weight:400;letter-spacing:-0.029px;-webkit-text-stroke:0.42px #404040;">00000254</span>
<span class="t" style="left:190.10px;top:452.70px;font-size:11.5px;line-height:11.5px;color:#333;font-weight:400;letter-spacing:0.155px;-webkit-text-stroke:0.42px #333;">Ítalo Duarte</span>
<span class="t" style="left:363.50px;top:443.65px;font-size:11.5px;line-height:11.5px;color:#404040;font-weight:400;letter-spacing:0.100px;-webkit-text-stroke:0.42px #404040;">03/03/2022 a</span>
<span class="t" style="left:363.50px;top:456.65px;font-size:11.5px;line-height:11.5px;color:#404040;font-weight:400;letter-spacing:0.100px;-webkit-text-stroke:0.42px #404040;">03/02/2023</span>
<span class="t" style="left:476.60px;top:444.95px;font-size:11.5px;line-height:11.5px;color:#404040;font-weight:400;letter-spacing:0.100px;-webkit-text-stroke:0.42px #404040;">03/03/2022 a</span>
<span class="t" style="left:476.60px;top:457.85px;font-size:11.5px;line-height:11.5px;color:#404040;font-weight:400;letter-spacing:0.100px;-webkit-text-stroke:0.42px #404040;">03/02/2023</span>
<span class="t" style="left:600.30px;top:449.05px;font-size:11.5px;line-height:11.5px;color:#404040;font-weight:400;letter-spacing:0.000px;-webkit-text-stroke:0.42px #404040;">2</span>
<span class="t" style="left:700.30px;top:443.65px;font-size:11.5px;line-height:11.5px;color:#404040;font-weight:400;letter-spacing:0.073px;-webkit-text-stroke:0.42px #404040;">03/03/2022 a</span>
<span class="t" style="left:700.30px;top:456.65px;font-size:11.5px;line-height:11.5px;color:#404040;font-weight:400;letter-spacing:0.078px;-webkit-text-stroke:0.42px #404040;">03/02/2023</span>
<span class="t" style="left:45.80px;top:504.20px;font-size:11.5px;line-height:11.5px;color:#404040;font-weight:400;letter-spacing:-0.029px;-webkit-text-stroke:0.42px #404040;">00001640</span>
<span class="t" style="left:190.10px;top:502.40px;font-size:11.5px;line-height:11.5px;color:#333;font-weight:400;letter-spacing:0.133px;-webkit-text-stroke:0.42px #333;">Bruno Martins</span>
<span class="t" style="left:363.50px;top:493.58px;font-size:11.5px;line-height:11.5px;color:#404040;font-weight:400;letter-spacing:0.100px;-webkit-text-stroke:0.42px #404040;">03/03/2022 a</span>
<span class="t" style="left:363.50px;top:506.58px;font-size:11.5px;line-height:11.5px;color:#404040;font-weight:400;letter-spacing:0.100px;-webkit-text-stroke:0.42px #404040;">03/02/2023</span>
<span class="t" style="left:476.60px;top:494.88px;font-size:11.5px;line-height:11.5px;color:#404040;font-weight:400;letter-spacing:0.100px;-webkit-text-stroke:0.42px #404040;">03/03/2022 a</span>
<span class="t" style="left:476.60px;top:507.78px;font-size:11.5px;line-height:11.5px;color:#404040;font-weight:400;letter-spacing:0.100px;-webkit-text-stroke:0.42px #404040;">03/02/2023</span>
<span class="t" style="left:600.30px;top:498.98px;font-size:11.5px;line-height:11.5px;color:#404040;font-weight:400;letter-spacing:0.000px;-webkit-text-stroke:0.42px #404040;">2</span>
<span class="t" style="left:700.30px;top:493.58px;font-size:11.5px;line-height:11.5px;color:#404040;font-weight:400;letter-spacing:0.073px;-webkit-text-stroke:0.42px #404040;">03/03/2022 a</span>
<span class="t" style="left:700.30px;top:506.58px;font-size:11.5px;line-height:11.5px;color:#404040;font-weight:400;letter-spacing:0.078px;-webkit-text-stroke:0.42px #404040;">03/02/2023</span>
<span class="t" style="left:45.80px;top:555.10px;font-size:11.5px;line-height:11.5px;color:#404040;font-weight:400;letter-spacing:-0.029px;-webkit-text-stroke:0.42px #404040;">00002033</span>
<span class="t" style="left:190.10px;top:551.40px;font-size:11.5px;line-height:11.5px;color:#333;font-weight:400;letter-spacing:-0.418px;-webkit-text-stroke:0.42px #333;">Carlos Sousa</span>
<span class="t" style="left:363.50px;top:543.51px;font-size:11.5px;line-height:11.5px;color:#404040;font-weight:400;letter-spacing:0.100px;-webkit-text-stroke:0.42px #404040;">03/03/2022 a</span>
<span class="t" style="left:363.50px;top:556.51px;font-size:11.5px;line-height:11.5px;color:#404040;font-weight:400;letter-spacing:0.100px;-webkit-text-stroke:0.42px #404040;">03/02/2023</span>
<span class="t" style="left:476.60px;top:544.81px;font-size:11.5px;line-height:11.5px;color:#404040;font-weight:400;letter-spacing:0.100px;-webkit-text-stroke:0.42px #404040;">03/03/2022 a</span>
<span class="t" style="left:476.60px;top:557.71px;font-size:11.5px;line-height:11.5px;color:#404040;font-weight:400;letter-spacing:0.100px;-webkit-text-stroke:0.42px #404040;">03/02/2023</span>
<span class="t" style="left:600.30px;top:548.91px;font-size:11.5px;line-height:11.5px;color:#404040;font-weight:400;letter-spacing:0.000px;-webkit-text-stroke:0.42px #404040;">2</span>
<span class="t" style="left:700.30px;top:543.51px;font-size:11.5px;line-height:11.5px;color:#404040;font-weight:400;letter-spacing:0.073px;-webkit-text-stroke:0.42px #404040;">03/03/2022 a</span>
<span class="t" style="left:700.30px;top:556.51px;font-size:11.5px;line-height:11.5px;color:#404040;font-weight:400;letter-spacing:0.078px;-webkit-text-stroke:0.42px #404040;">03/02/2023</span>
<span class="t" style="left:588.50px;top:603.00px;font-size:11.5px;line-height:11.5px;color:#808080;font-weight:400;letter-spacing:-0.120px;-webkit-text-stroke:0.15px #808080;">Exibindo 1 a 10 de 8 itens</span>
<span class="t" style="left:734.60px;top:603.00px;font-size:11.5px;line-height:11.5px;color:#888;font-weight:400;letter-spacing:-0.400px;-webkit-text-stroke:0.15px #888;">10</span>
<span class="t" style="left:90.20px;top:602.60px;font-size:11.5px;line-height:11.5px;color:#fff;font-weight:400;letter-spacing:0.000px;-webkit-text-stroke:0px #fff;">1</span>
</div>
<div style="position:absolute;left:0px;top:0px;width:808px;height:3px;background:linear-gradient(#dedede 0,#dedede 1px,#cbcbcb 1px,#cbcbcb 3px)"></div>
<div style="position:absolute;left:0px;top:0px;width:3px;height:620px;background:linear-gradient(90deg,#dedede 0,#dedede 1px,#cbcbcb 1px,#cbcbcb 3px)"></div>
<div style="position:absolute;left:0px;top:616px;width:808px;height:4px;background:linear-gradient(#cbcbcb 0,#cbcbcb 2px,#e4e4e4 2px,#e4e4e4 3px,#fff 3px,#fff 4px)"></div>
<div style="position:absolute;left:805px;top:0px;width:3px;height:619px;background:linear-gradient(90deg,#c9c9c9 0,#c9c9c9 2px,#dedede 2px,#dedede 3px)"></div>
</div></body></html>
